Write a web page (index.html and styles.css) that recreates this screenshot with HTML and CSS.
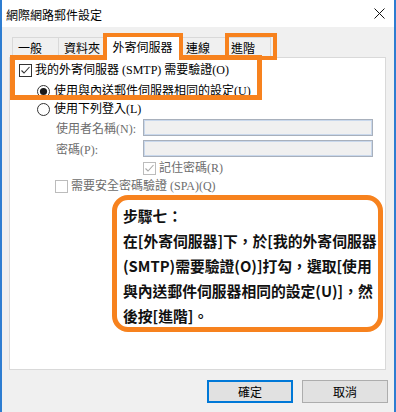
FILE: index.html
```html
<!DOCTYPE html>
<html lang="zh-Hant">
<head>
<meta charset="utf-8">
<link rel="stylesheet" href="styles.css">
</head>
<body>
<div class="win">
  <div class="titlebar">
    <span class="title">網際網路郵件設定</span>
    <svg class="close" width="11" height="11" viewBox="0 0 11 11"><path d="M0.5 0.5 L10.5 10.5 M10.5 0.5 L0.5 10.5" stroke="#111" stroke-width="1" fill="none"/></svg>
  </div>
  <div class="tabs">
    <div class="tab w1">一般</div>
    <div class="tab w2">資料夾</div>
    <div class="tab sel">外寄伺服器</div>
    <div class="tab w4">連線</div>
    <div class="tab w5">進階</div>
  </div>
  <div class="panel">
    <div class="row r1">
      <svg class="box" width="13" height="13" viewBox="0 0 13 13"><rect x="0.5" y="0.5" width="12" height="12" fill="#fff" stroke="#333"/><path d="M2.5 6.5 L5 9 L10.5 3" stroke="#333" stroke-width="1.1" fill="none"/></svg>
      <span class="txt">我的外寄伺服器 (SMTP) 需要驗證(O)</span>
    </div>
    <div class="row r2 ind1">
      <svg class="radio" width="13" height="13" viewBox="0 0 13 13"><circle cx="6.5" cy="6.5" r="6" fill="#fff" stroke="#333"/><circle cx="6.5" cy="6.5" r="3.6" fill="#1a1a1a"/></svg>
      <span class="txt">使用與內送郵件伺服器相同的設定(U)</span>
    </div>
    <div class="row r3 ind1">
      <svg class="radio" width="13" height="13" viewBox="0 0 13 13"><circle cx="6.5" cy="6.5" r="6" fill="#fff" stroke="#333"/></svg>
      <span class="txt">使用下列登入(L)</span>
    </div>
    <div class="row r4 ind2">
      <span class="lblcol dis">使用者名稱(N):</span>
      <span class="input"></span>
    </div>
    <div class="row r5 ind2">
      <span class="lblcol dis">密碼(P):</span>
      <span class="input"></span>
    </div>
    <div class="row r6 ind3">
      <svg class="box" width="13" height="13" viewBox="0 0 13 13"><rect x="0.5" y="0.5" width="12" height="12" fill="#fff" stroke="#bcbcbc"/><path d="M2.5 6.5 L5 9 L10.5 3" stroke="#a8a8a8" stroke-width="1.1" fill="none"/></svg>
      <span class="txt dis">記住密碼(R)</span>
    </div>
    <div class="row r7 ind2b">
      <svg class="box" width="13" height="13" viewBox="0 0 13 13"><rect x="0.5" y="0.5" width="12" height="12" fill="#fff" stroke="#bcbcbc"/></svg>
      <span class="txt dis">需要安全密碼驗證 (SPA)(Q)</span>
    </div>
  </div>
  <div class="buttons">
    <div class="btn primary">確定</div>
    <div class="btn">取消</div>
  </div>

  <div class="hl hl-group"></div>
  <div class="hl hl-tab"></div>
  <div class="hl hl-adv"></div>
  <div class="callout">步驟七：<br>在[外寄伺服器]下，於[我的外寄伺服器<br>(SMTP)需要驗證(O)]打勾，選取[使用<br>與內送郵件伺服器相同的設定(U)]，然<br>後按[進階]。</div>
</div>
</body>
</html>
```

FILE: styles.css
```css
html, body {
  margin: 0;
  padding: 0;
  background: #fff;
}

.win {
  position: relative;
  width: 396px;
  height: 412px;
  box-sizing: border-box;
  border-left: 2px solid #2e7dd1;
  border-right: 2px solid #2e7dd1;
  background: #f0f0f0;
  display: flex;
  flex-direction: column;
  font-family: "Noto Sans CJK TC", sans-serif;
  font-size: 12px;
  color: #000;
  overflow: hidden;
}

.titlebar {
  height: 27px;
  background: #fff;
  display: flex;
  align-items: center;
  justify-content: space-between;
  padding: 2px 9px 0 4px;
  box-sizing: border-box;
  flex: none;
}

.title {
  font-size: 12px;
  line-height: 16px;
}

.close {
  display: block;
  margin-top: -3px;
}

.tabs {
  height: 20px;
  margin-top: 10px;
  padding-left: 10px;
  display: flex;
  align-items: flex-end;
  flex: none;
}

.tab {
  box-sizing: border-box;
  height: 20px;
  border: 1px solid #d9d9d9;
  border-bottom: none;
  margin-right: -1px;
  padding-left: 5px;
  line-height: 19px;
  background: #f0f0f0;
  white-space: nowrap;
}

.w1 { width: 47px; }
.w2 { width: 48px; }
.w4 { width: 46px; margin-left: 0; }
.w5 { width: 46px; }

.tab.sel {
  position: relative;
  z-index: 3;
  width: 77px;
  height: 25px;
  margin-bottom: -3px;
  margin-left: -1px;
  padding: 0;
  text-align: center;
  line-height: 21px;
  background: #fff;
  border-color: #fff;
}

.panel {
  flex: none;
  height: 313px;
  margin: 0 8px 0 7px;
  box-sizing: border-box;
  border: 1px solid #d9d9d9;
  background: #fff;
  padding: 3px 0 0 9px;
  font-family: "Liberation Serif", "Noto Sans CJK TC", serif;
}

.row {
  display: flex;
  align-items: center;
  height: 18px;
  white-space: nowrap;
}

.row svg { display: block; flex: none; }

.box + .txt { margin-left: 3px; }
.radio + .txt { margin-left: 4px; }

.txt { line-height: 18px; }

.r2 { margin-top: 3px; }
.r3 { margin-top: 0; }
.r4 { margin-top: 1px; height: 17px; }
.r5 { margin-top: 4px; height: 17px; }
.r6 { margin-top: 2px; }
.r7 { margin-top: 0; }

.ind1 { padding-left: 18px; }
.ind2 { padding-left: 37px; }
.ind2b { padding-left: 36px; }
.ind3 { padding-left: 124px; }

.dis { color: #6d6d6d; }

.lblcol {
  width: 87px;
  flex: none;
}

.input {
  width: 230px;
  height: 17px;
  box-sizing: border-box;
  border: 1px solid #a8b0bc;
  box-shadow: inset 0 0 0 1px #c9d8ec;
  background: #f0f0f0;
}

.buttons {
  display: flex;
  justify-content: flex-end;
  gap: 9px;
  margin-top: 10px;
  padding-right: 6px;
  flex: none;
}

.btn {
  width: 86px;
  height: 23px;
  box-sizing: border-box;
  border: 1px solid #adadad;
  background: #e1e1e1;
  display: flex;
  align-items: center;
  justify-content: center;
  font-size: 12px;
}

.btn.primary {
  border: 2px solid #0078d7;
}

.hl {
  position: absolute;
  box-sizing: border-box;
  border: 4px solid #f7821e;
  pointer-events: none;
}

.hl-group {
  z-index: 2;
  left: 8px;
  top: 55px;
  width: 252px;
  height: 45px;
  border-width: 5px;
}

.hl-tab {
  z-index: 4;
  left: 101px;
  top: 33px;
  width: 80px;
  height: 27px;
  border-bottom: none;
}

.hl-adv {
  z-index: 4;
  left: 223px;
  top: 33px;
  width: 52px;
  height: 27px;
}

.callout {
  position: absolute;
  z-index: 2;
  left: 110px;
  top: 195px;
  width: 271px;
  height: 137px;
  box-sizing: border-box;
  border: 5px solid #f7821e;
  border-radius: 16px;
  background: #fff;
  padding: 3px 0 0 6px;
  font-family: "Noto Sans CJK TC", sans-serif;
  font-weight: bold;
  font-size: 14.8px;
  line-height: 25px;
  white-space: nowrap;
  color: #111;
}
```
